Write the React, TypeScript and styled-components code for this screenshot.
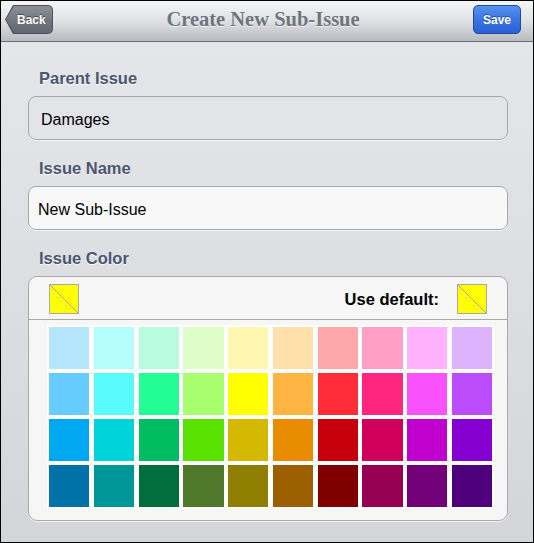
import React from 'react'
import styled, { createGlobalStyle } from 'styled-components'

const GlobalStyle = createGlobalStyle`
  html, body {
    margin: 0;
    padding: 0;
    background: #000;
  }
`

const palette = [
  ['#b5e6fc', '#b5fdfd', '#b8fbde', '#dffdc8', '#fff6b2', '#ffe0aa', '#ffa8ac', '#ff9fc8', '#ffb1fe', '#dcb3fe'],
  ['#66cbfe', '#58fcfd', '#22fd95', '#a9fe70', '#ffff00', '#feb442', '#ff2d39', '#ff2680', '#f951fb', '#bb4bfb'],
  ['#00a7f1', '#00d4db', '#00bd62', '#5ae200', '#d2b900', '#e88d00', '#c8000d', '#d0005a', '#c200cd', '#8600d0'],
  ['#0072a8', '#009698', '#006f3d', '#50782a', '#8f7f00', '#9c6000', '#800000', '#970052', '#720078', '#4f007b'],
]

export default function App() {
  return (
    <>
      <GlobalStyle />
      <Screen>
        <NavBar>
          <BackButton>
            <BackFace>Back</BackFace>
          </BackButton>
          <Title>Create New Sub-Issue</Title>
          <SaveButton>Save</SaveButton>
        </NavBar>

        <Content>
          <Label>Parent Issue</Label>
          <Field $readOnly>Damages</Field>

          <Label>Issue Name</Label>
          <Field>New Sub-Issue</Field>

          <Label>Issue Color</Label>
          <ColorPanel>
            <DefaultRow>
              <Swatch />
              <DefaultText>Use default:</DefaultText>
              <Swatch />
            </DefaultRow>
            <PaletteGrid>
              {palette.map((row, r) =>
                row.map((c, i) => <Cell key={r + '-' + i} $color={c} />)
              )}
            </PaletteGrid>
          </ColorPanel>
        </Content>
      </Screen>
    </>
  )
}

const Screen = styled.div`
  width: 534px;
  height: 543px;
  box-sizing: border-box;
  border: 1px solid #000;
  display: flex;
  flex-direction: column;
  font-family: 'Liberation Sans', Arial, sans-serif;
  overflow: hidden;
`

const NavBar = styled.div`
  height: 40px;
  flex-shrink: 0;
  display: flex;
  align-items: flex-start;
  padding: 0 12px 0 4px;
  background: linear-gradient(to bottom, #f5f6f7 0%, #dfe1e4 50%, #b8bbc1 100%);
  border-bottom: 1px solid #6b6f76;
`

const BackButton = styled.div`
  margin-top: 4px;
  width: 48px;
  height: 29px;
  box-sizing: border-box;
  padding: 1px;
  background: #4d5158;
  border-radius: 0 5px 5px 0;
  clip-path: polygon(8px 0, 100% 0, 100% 100%, 8px 100%, 0 50%);
  display: flex;
`

const BackFace = styled.div`
  flex: 1;
  display: flex;
  align-items: center;
  padding-left: 11px;
  border-radius: 0 4px 4px 0;
  clip-path: polygon(8px 0, 100% 0, 100% 100%, 8px 100%, 0 50%);
  background: linear-gradient(to bottom, #8d9198 0%, #71757c 55%, #63676e 100%);
  color: #fff;
  font-weight: bold;
  font-size: 12px;
  text-shadow: 0 -1px 0 rgba(0, 0, 0, 0.45);
`

const Title = styled.div`
  flex: 1;
  text-align: center;
  line-height: 36px;
  font-family: 'Liberation Serif', 'Times New Roman', serif;
  font-weight: bold;
  font-size: 20.5px;
  color: #6f757e;
  text-shadow: 0 1px 0 rgba(255, 255, 255, 0.7);
`

const SaveButton = styled.div`
  margin-top: 4px;
  width: 48px;
  height: 29px;
  box-sizing: border-box;
  display: flex;
  align-items: center;
  justify-content: center;
  border: 1px solid #21489a;
  border-radius: 5px;
  background: linear-gradient(to bottom, #5692f1 0%, #3a74e2 50%, #2a60d6 100%);
  color: #fff;
  font-weight: bold;
  font-size: 12px;
  text-shadow: 0 -1px 0 rgba(0, 0, 0, 0.4);
`

const Content = styled.div`
  flex: 1;
  display: flex;
  flex-direction: column;
  padding: 26px 25px 0 27px;
  background: linear-gradient(to bottom, #e4e6e9 0%, #dcdee1 50%, #d4d5d9 100%);
`

const Label = styled.div`
  height: 20px;
  line-height: 20px;
  padding-left: 11px;
  margin-bottom: 8px;
  font-size: 16.5px;
  font-weight: bold;
  color: #4b5670;
  text-shadow: 0 1px 0 rgba(255, 255, 255, 0.85);
`

const Field = styled.div<{ $readOnly?: boolean }>`
  height: 44px;
  box-sizing: border-box;
  display: flex;
  align-items: center;
  padding-top: 4px;
  padding-left: ${p => (p.$readOnly ? '12px' : '9px')};
  margin-bottom: 18px;
  border: 1px solid #a7a8ac;
  border-radius: 8px;
  background: ${p => (p.$readOnly ? '#e3e4e7' : '#f8f8f8')};
  box-shadow: 0 1px 0 rgba(255, 255, 255, 0.6);
  font-size: 16px;
  color: #000;
`

const ColorPanel = styled.div`
  height: 245px;
  box-sizing: border-box;
  border: 1px solid #a9a9a9;
  border-radius: 9px;
  background: #f6f6f6;
  box-shadow: 0 1px 0 rgba(255, 255, 255, 0.7);
  display: flex;
  flex-direction: column;
`

const DefaultRow = styled.div`
  height: 43px;
  display: flex;
  align-items: flex-start;
  padding: 7px 20px 0 20px;
  box-sizing: border-box;
  border-bottom: 1px solid #a9a9a9;
`

const Swatch = styled.div`
  width: 30px;
  height: 30px;
  box-sizing: border-box;
  border: 1px solid #a9a9a9;
  background: linear-gradient(
    to top right,
    #ffff00 calc(50% - 0.6px),
    #a3a3b8 50%,
    #ffff00 calc(50% + 0.6px)
  );
`

const DefaultText = styled.div`
  flex: 1;
  text-align: right;
  padding-right: 18px;
  line-height: 30px;
  font-size: 16.5px;
  font-weight: bold;
  color: #000;
`

const PaletteGrid = styled.div`
  margin: 5px 13px 0 18px;
  padding: 2px;
  background: #fff;
  display: grid;
  grid-template-columns: repeat(10, 1fr);
  grid-auto-rows: 42px;
  column-gap: 4.5px;
  row-gap: 4px;
`

const Cell = styled.div<{ $color: string }>`
  background: ${p => p.$color};
`
